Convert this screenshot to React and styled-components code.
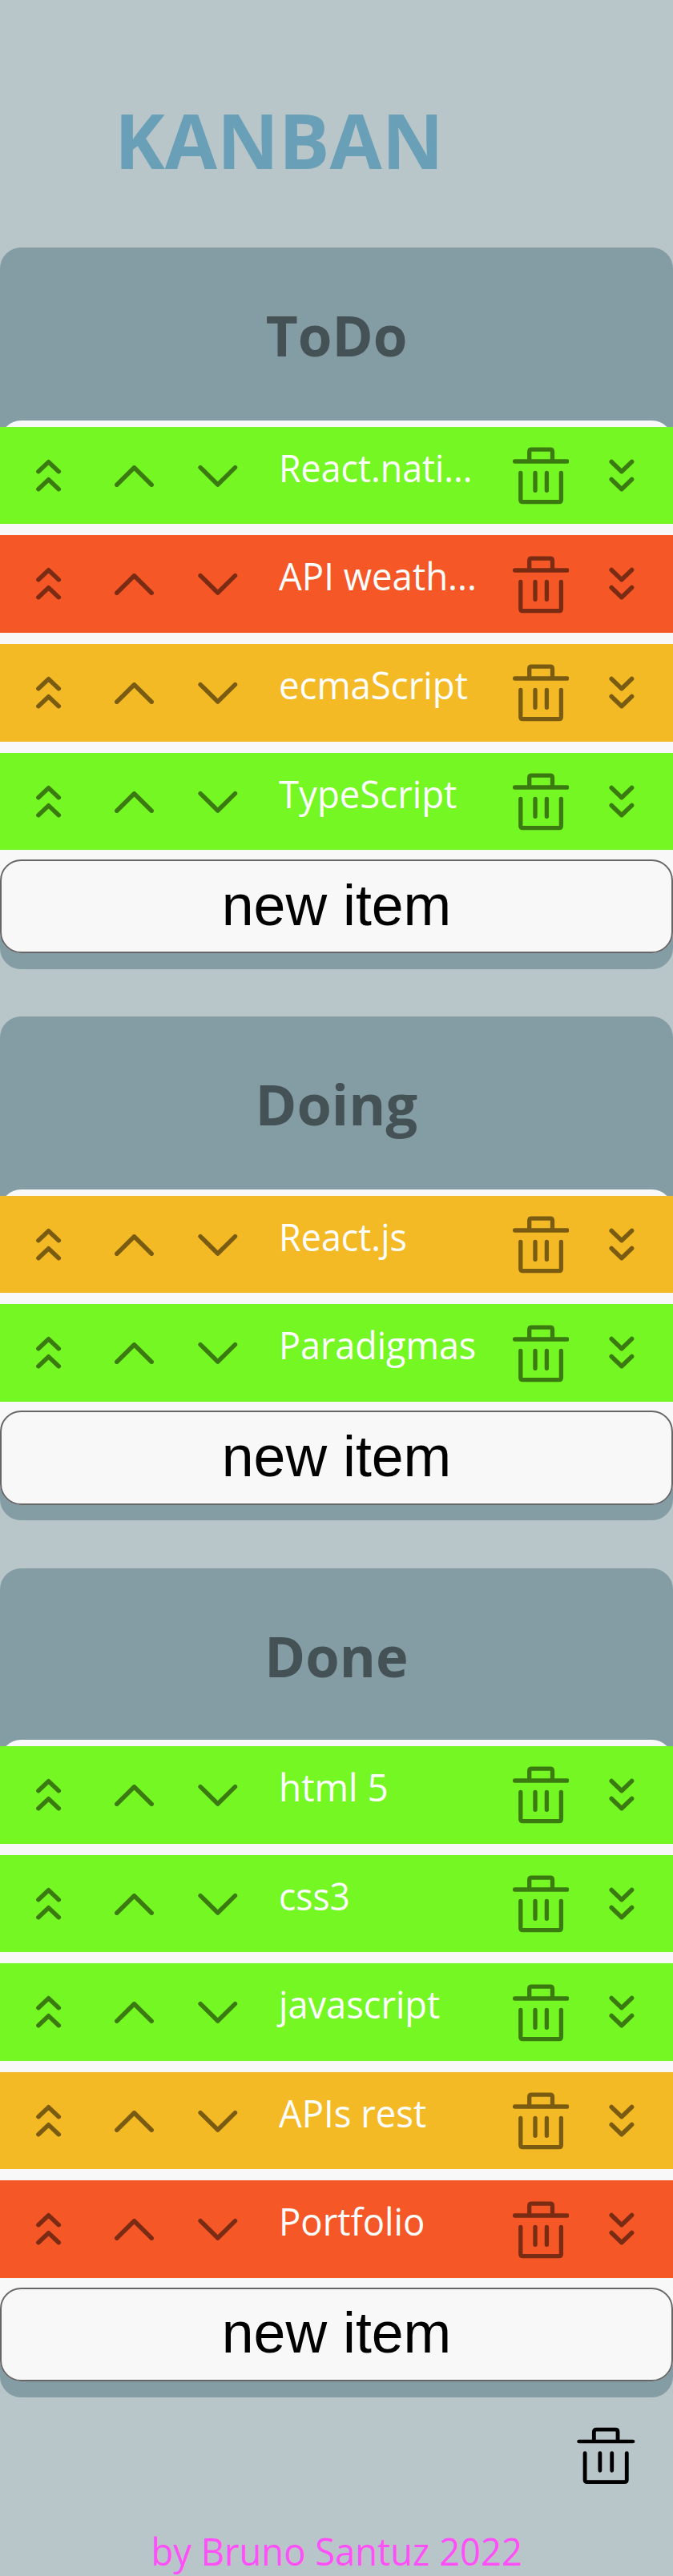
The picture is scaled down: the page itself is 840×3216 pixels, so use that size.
import React from "react";
import styled, { createGlobalStyle } from "styled-components";

const Global = createGlobalStyle`
  * { box-sizing: border-box; }
  body { margin: 0; background: #b8c6ca; font-family: "Open Sans", "Noto Sans", sans-serif; }
`;

const Page = styled.main`
  height: 3216px;
  overflow: hidden;
  background: #b8c6ca;
`;

const Header = styled.header`
  height: 309.3px;
  padding: 110.5px 0 0 142.5px;
`;

const Title = styled.h1`
  margin: 0;
  font-size: 94.3px;
  line-height: 128px;
  font-weight: 700;
  color: #6a9fb8;
  transform-origin: 0 50%;
  transform: scaleX(1.003);
`;

const Board = styled.div`
  display: flex;
  flex-direction: column;
  gap: 59.3px;
`;

const Column = styled.section`
  background: #849ca3;
  border-radius: 26.25px;
  padding-bottom: 19.5px;
`;

const ColumnTitle = styled.h2`
  margin: 0;
  height: ${(p) => p.$height}px;
  line-height: 219.3px;
  text-align: center;
  font-size: 70.5px;
  font-weight: 700;
  color: #445155;
`;

const Fit = styled.span`
  display: inline-block;
  transform: scaleX(${(p) => p.$scale});
  transform-origin: ${(p) => p.$origin || "50%"} 50%;
`;

const Panel = styled.div`
  background: #f8f8f8;
  border-radius: 26.25px;
  padding-top: 7.5px;
`;

const tones = { green: "#75f723", red: "#f55727", yellow: "#f4ba26" };

const Row = styled.div`
  display: flex;
  height: 121.6px;
  margin-bottom: 14px;
  background: ${(p) => tones[p.$tone]};
`;

const Cell = styled.button`
  flex: none;
  width: ${(p) => p.$w}px;
  height: 121px;
  padding: 0;
  border: 0;
  background: none;
  color: #000;
  opacity: 0.5;
`;

const TrashCell = styled(Cell)`
  display: flex;
  align-items: flex-start;
  justify-content: flex-end;
  padding-top: 25.5px;
`;

const Label = styled.div`
  flex: none;
  width: 266px;
  padding-left: 5.5px;
  font-size: 47.6px;
  line-height: 102.4px;
  white-space: nowrap;
  color: #fff;
`;

const NewItem = styled.button`
  display: block;
  width: 100%;
  height: 117.5px;
  margin-top: -2.4px;
  padding: 0 0 4px;
  border: 2px solid #666;
  border-radius: 26.25px;
  background: #f8f8f8;
  color: #000;
  font: 71.6px "Liberation Sans", Arial, sans-serif;
`;

const BinBar = styled.div`
  display: flex;
  justify-content: flex-end;
  height: 160.2px;
  padding: 37px 47px 0 0;
`;

const Footer = styled.footer`
  color: #ff4ff8;
  text-align: center;
  font-size: 47.6px;
  line-height: 64px;
`;

const Svg = styled.svg`
  display: block;
  fill: none;
  stroke: currentColor;
  stroke-width: ${(p) => p.$stroke || 5.5};
  stroke-linecap: round;
  stroke-linejoin: round;
`;

const RowIcon = ({ d, w }) => (
  <Svg width={w} height="121" viewBox={`0 0 ${w} 121`}>
    <path d={d} />
  </Svg>
);

const Trash = ({ width, stroke = 5.3 }) => (
  <Svg width={width} height="72" viewBox="0 0 70.4 72" preserveAspectRatio="none" $stroke={stroke}>
    <path d="M2.6 18H67.8M20.7 18V6Q20.7 3.2 23.5 3.2H46.7Q49.5 3.2 49.5 6V18M9.8 32.5V66Q9.8 68.7 12.5 68.7H57.7Q60.4 68.7 60.4 66V32.5M28 32.5V54.3M42.4 32.5V54.3" />
  </Svg>
);

const columns = [
  {
    title: "ToDo",
    scale: 0.98,
    height: 216,
    items: [
      ["React.nati...", "green", 0.94],
      ["API weath...", "red", 0.957],
      ["ecmaScript", "yellow", 0.957],
      ["TypeScript", "green", 0.957],
    ],
  },
  {
    title: "Doing",
    scale: 0.995,
    height: 216,
    items: [
      ["React.js", "yellow", 0.943],
      ["Paradigmas", "green", 0.943],
    ],
  },
  {
    title: "Done",
    scale: 0.975,
    height: 214.8,
    items: [
      ["html 5", "green", 0.965],
      ["css3", "green", 0.932],
      ["javascript", "green", 0.95],
      ["APIs rest", "yellow", 0.955],
      ["Portfolio", "red", 0.955],
    ],
  },
];

const Item = ({ text, tone, scale }) => (
  <Row $tone={tone}>
    <Cell $w={120} aria-label="Move to top">
      <RowIcon w={120} d="M47.9 55.7L60.6 43.7L73.3 55.7M47.9 77.7L60.6 65.7L73.3 77.7" />
    </Cell>
    <Cell $w={100} aria-label="Move up">
      <RowIcon w={100} d="M25.8 72.2L47.5 50.8L69.2 72.2" />
    </Cell>
    <Cell $w={122} aria-label="Move down">
      <RowIcon w={122} d="M30.1 50.6L51.8 72L73.5 50.6" />
    </Cell>
    <Label>
      <Fit $scale={scale} $origin="0">{text}</Fit>
    </Label>
    <TrashCell $w={102} aria-label="Delete">
      <Trash width="70.4" />
    </TrashCell>
    <Cell $w={130} aria-label="Move to bottom">
      <RowIcon w={130} d="M53.2 43.5L65.9 55.7L78.6 43.5M53.2 65.5L65.9 77.7L78.6 65.5" />
    </Cell>
  </Row>
);

export default function App() {
  return (
    <Page>
      <Global />
      <Header>
        <Title>KANBAN</Title>
      </Header>
      <Board>
        {columns.map((c) => (
          <Column key={c.title}>
            <ColumnTitle $height={c.height}>
              <Fit $scale={c.scale}>{c.title}</Fit>
            </ColumnTitle>
            <Panel>
              {c.items.map(([text, tone, scale]) => (
                <Item key={text} text={text} tone={tone} scale={scale} />
              ))}
              <NewItem>new item</NewItem>
            </Panel>
          </Column>
        ))}
      </Board>
      <BinBar>
        <Trash width="72.6" stroke={4.7} />
      </BinBar>
      <Footer>
        <Fit $scale={0.953}>by Bruno Santuz 2022</Fit>
      </Footer>
    </Page>
  );
}
